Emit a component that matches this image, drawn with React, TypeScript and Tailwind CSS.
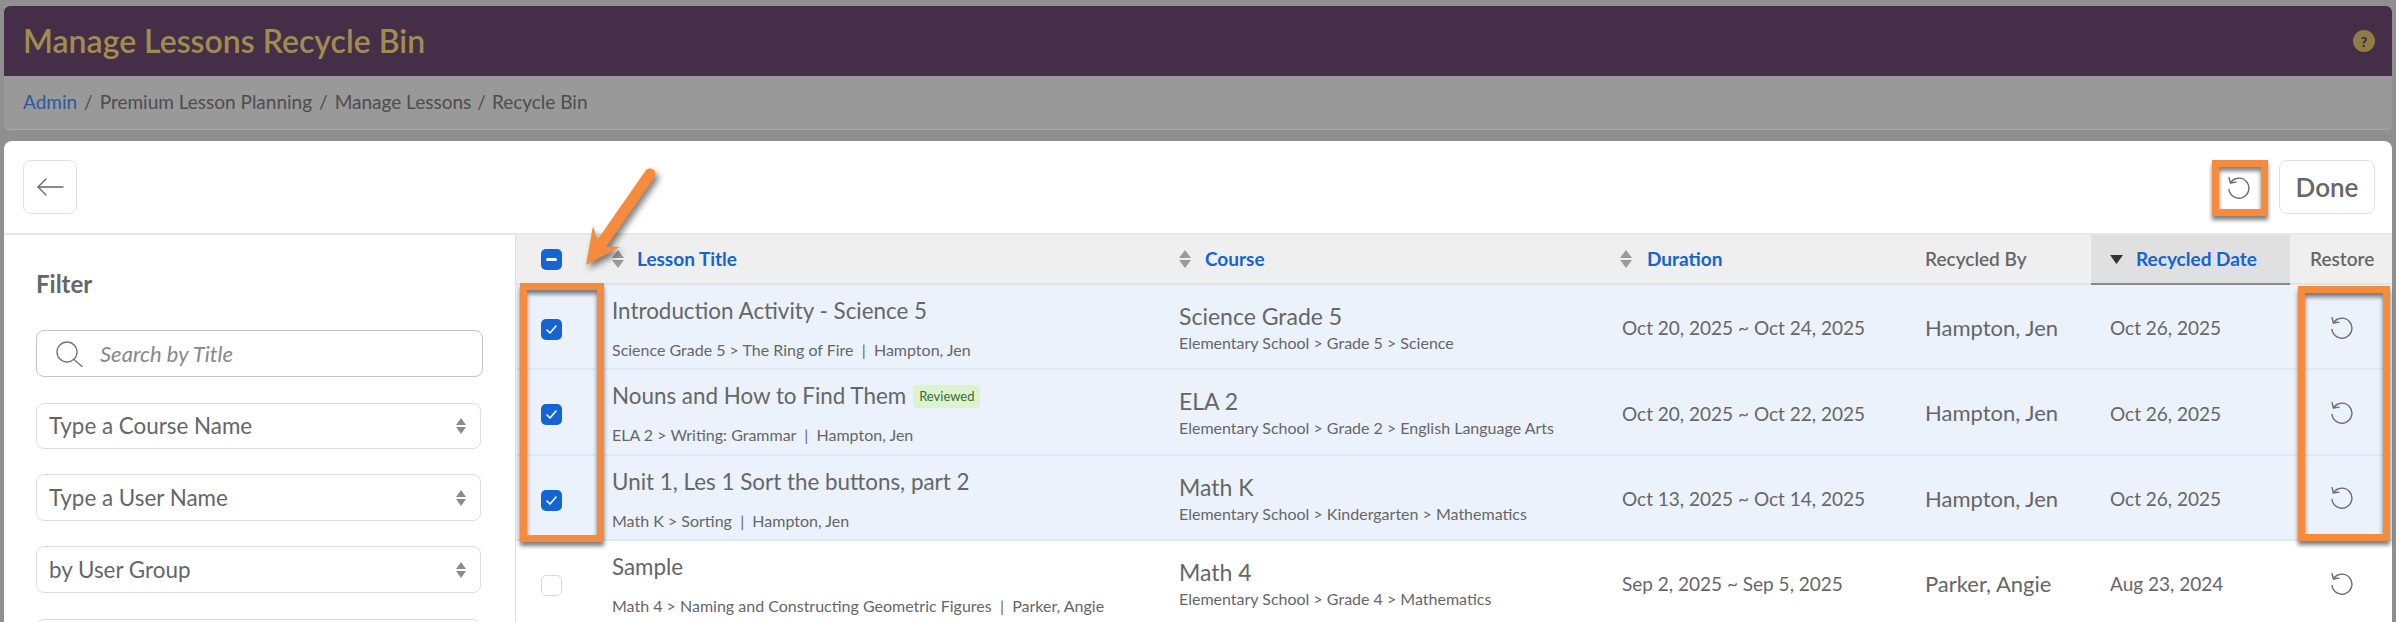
import type { ReactNode } from 'react'

const rowGrid = 'grid grid-cols-[96px_567px_441px_305px_166px_199px_102px]'

interface Lesson {
  title: string
  reviewed?: boolean
  crumbs: string
  person: string
  course: string
  path: string
  duration: string
  date: string
  selected: boolean
}

const lessons: Lesson[] = [
  {
    title: 'Introduction Activity - Science 5',
    crumbs: 'Science Grade 5 > The Ring of Fire',
    person: 'Hampton, Jen',
    course: 'Science Grade 5',
    path: 'Elementary School > Grade 5 > Science',
    duration: 'Oct 20, 2025 ~ Oct 24, 2025',
    date: 'Oct 26, 2025',
    selected: true,
  },
  {
    title: 'Nouns and How to Find Them',
    reviewed: true,
    crumbs: 'ELA 2 > Writing: Grammar',
    person: 'Hampton, Jen',
    course: 'ELA 2',
    path: 'Elementary School > Grade 2 > English Language Arts',
    duration: 'Oct 20, 2025 ~ Oct 22, 2025',
    date: 'Oct 26, 2025',
    selected: true,
  },
  {
    title: 'Unit 1, Les 1 Sort the buttons, part 2',
    crumbs: 'Math K > Sorting',
    person: 'Hampton, Jen',
    course: 'Math K',
    path: 'Elementary School > Kindergarten > Mathematics',
    duration: 'Oct 13, 2025 ~ Oct 14, 2025',
    date: 'Oct 26, 2025',
    selected: true,
  },
  {
    title: 'Sample',
    crumbs: 'Math 4 > Naming and Constructing Geometric Figures',
    person: 'Parker, Angie',
    course: 'Math 4',
    path: 'Elementary School > Grade 4 > Mathematics',
    duration: 'Sep 2, 2025 ~ Sep 5, 2025',
    date: 'Aug 23, 2024',
    selected: false,
  },
]

function RestoreIcon() {
  return (
    <svg width="24" height="24" viewBox="0 0 24 24" fill="none" stroke="#6a6a6a" strokeWidth="1.4" strokeLinecap="round" strokeLinejoin="round">
      <path d="M4.6 7.6A10 10 0 1 1 3 14.5" />
      <path d="M3 2.6 4.4 8l5.6-.9" />
    </svg>
  )
}

function SortArrows() {
  return (
    <svg width="12" height="18" viewBox="0 0 12 18" fill="#9a9a9a" className="shrink-0">
      <path d="M6 0 12 8H0Z" />
      <path d="M0 10H12L6 18Z" />
    </svg>
  )
}

function SelectCaret() {
  return (
    <svg width="10" height="16" viewBox="0 0 10 16" fill="#8c8c8c">
      <path d="M5 0 10 7H0Z" />
      <path d="M0 9H10L5 16Z" />
    </svg>
  )
}

function Checkbox({ state }: { state: 'checked' | 'mixed' | 'empty' }) {
  if (state === 'empty') {
    return <div className="h-[21px] w-[21px] rounded-[5px] border border-[#d9d9d9] bg-white" />
  }
  return (
    <div className="flex h-[21px] w-[21px] items-center justify-center rounded-[5px] bg-[#1464d2]">
      {state === 'checked' ? (
        <svg width="13" height="13" viewBox="0 0 13 13" fill="none" stroke="white" strokeWidth="1.6" strokeLinecap="round" strokeLinejoin="round">
          <path d="M2 7l3 3 6-7" />
        </svg>
      ) : (
        <div className="h-[3px] w-[11px] rounded-sm bg-white" />
      )}
    </div>
  )
}

function FilterSelect({ label, className }: { label: string, className: string }) {
  return (
    <div className={`flex w-[445px] items-center justify-between rounded-lg border border-[#dedede] pl-[12px] pr-[14px] text-[22.4px] text-[#666] ${className}`}>
      <span>{label}</span>
      <SelectCaret />
    </div>
  )
}

function HeaderLink({ children }: { children: ReactNode }) {
  return <span className="font-bold text-[#1464d2]">{children}</span>
}

function LessonRow({ lesson }: { lesson: Lesson }) {
  return (
    <div className={`${rowGrid} h-[85.33px] border-b-2 ${lesson.selected ? 'border-[#dbe9fa] bg-[#ebf2fc]' : 'border-transparent bg-white'}`}>
      <div className="flex items-center pl-[25px] pt-[6px]">
        <Checkbox state={lesson.selected ? 'checked' : 'empty'} />
      </div>
      <div className="pt-[10px]">
        <div className="flex h-[32px] items-center text-[22.4px] leading-[32px] text-[#666]">
          {lesson.title}
          {lesson.reviewed && (
            <span className="ml-[7px] flex h-[23px] items-center rounded-[3px] bg-[#dcf3d0] px-[6px] text-[13px] text-[#3d6b30]">Reviewed</span>
          )}
        </div>
        <div className="mt-[13px] whitespace-pre text-[16px] leading-[20px] text-[#666]">
          {lesson.crumbs}
          {'  |  '}
          {lesson.person}
        </div>
      </div>
      <div className="pt-[15px]">
        <div className="text-[23px] leading-[32px] text-[#666]">{lesson.course}</div>
        <div className="mt-[1px] text-[16px] leading-[20px] text-[#666]">{lesson.path}</div>
      </div>
      <div className="flex items-center pl-[2px] pt-[4px] text-[19px] text-[#666]">{lesson.duration}</div>
      <div className="flex items-center pt-[2px] text-[22px] text-[#666]">{lesson.person}</div>
      <div className="flex items-center pl-[19px] pt-[4px] text-[19px] text-[#666]">{lesson.date}</div>
      <div className="flex items-center pl-[39px]">
        <RestoreIcon />
      </div>
    </div>
  )
}

function TableHeader() {
  return (
    <div className={`${rowGrid} h-[50px] border-b-2 border-[#e3e3e3] bg-[#efefef] text-[19px]`}>
      <div className="flex items-center pl-[25px]">
        <Checkbox state="mixed" />
      </div>
      <div className="flex items-center gap-[13px]">
        <SortArrows />
        <HeaderLink>Lesson Title</HeaderLink>
      </div>
      <div className="flex items-center gap-[14px]">
        <SortArrows />
        <HeaderLink>Course</HeaderLink>
      </div>
      <div className="flex items-center gap-[15px]">
        <SortArrows />
        <HeaderLink>Duration</HeaderLink>
      </div>
      <div className="flex items-center font-semibold text-[#666]">Recycled By</div>
      <div className="-mb-[2px] flex items-center gap-[13px] border-b-2 border-[#888] bg-[#e0e0e0] pl-[19px]">
        <svg width="13" height="9" viewBox="0 0 13 9" fill="#333" className="shrink-0">
          <path d="M0 0H13L6.5 9Z" />
        </svg>
        <HeaderLink>Recycled Date</HeaderLink>
      </div>
      <div className="flex items-center pl-[20px] font-semibold text-[#666]">Restore</div>
    </div>
  )
}

function FilterPanel() {
  return (
    <div className="w-[511px] shrink-0 pl-[32px]">
      <div className="pt-[35px] text-[24px] font-bold leading-[28px] text-[#666]">Filter</div>
      <div className="mt-[32px] flex h-[47px] w-[447px] items-center rounded-lg border border-[#c4c4c4] pl-[19px]">
        <svg width="27" height="26" viewBox="0 0 27 26" fill="none" stroke="#777" strokeWidth="1.4" strokeLinecap="round">
          <circle cx="11" cy="11" r="10" />
          <path d="M18 18.5 26 25.5" />
        </svg>
        <span className="ml-[17px] text-[22px] italic text-[#888]">Search by Title</span>
      </div>
      <FilterSelect label="Type a Course Name" className="mt-[26px] h-[46px]" />
      <FilterSelect label="Type a User Name" className="mt-[25px] h-[47px]" />
      <FilterSelect label="by User Group" className="mt-[25px] h-[47px]" />
      <div className="mt-[26px] h-[47px] w-[445px] rounded-lg border border-[#dedede]" />
    </div>
  )
}

function Callouts() {
  const box = 'absolute border-[7px] border-[#f68b3e] [box-shadow:0_4px_4px_rgba(0,0,0,0.5),inset_0_4px_4px_rgba(0,0,0,0.5)]'
  return (
    <>
      <div className={`${box} left-[520px] top-[283px] h-[259px] w-[84px]`} />
      <div className={`${box} left-[2212px] top-[160px] h-[56px] w-[56px]`} />
      <div className={`${box} left-[2298px] top-[286px] h-[255px] w-[92px]`} />
      <svg
        className="absolute left-[570px] top-[160px] [filter:drop-shadow(3px_4px_3px_rgba(0,0,0,0.5))]"
        width="100"
        height="120"
        viewBox="0 0 100 120"
      >
        <path d="M23 66 27 78 37 87H50L16 105Z" fill="#f68b3e" />
        <path d="M80 14 32 83" stroke="#f68b3e" strokeWidth="11" strokeLinecap="round" />
      </svg>
    </>
  )
}

export default function App() {
  return (
    <div className="relative h-[622px] w-[2396px] overflow-hidden bg-[#8f8f8f] font-['Lato','Liberation_Sans',sans-serif]">
      <div className="px-[4px] pt-[6px]">
        <div className="rounded-b-md border-b border-[#a8a8a8] bg-[#999]">
          <div className="flex h-[70px] items-center justify-between rounded-t-md bg-[#452e47] pl-[19px] pr-[17px]">
            <div className="text-[32px] font-semibold text-[#a08c4e]">Manage Lessons Recycle Bin</div>
            <div className="flex h-[22px] w-[22px] items-center justify-center rounded-full bg-[#8f7b45] text-[14px] font-black text-[#3a2b35]">?</div>
          </div>
          <div className="flex h-[53px] items-center pl-[19px] text-[19px] text-[#4d4d4d]">
            <span className="text-[#2c5a9f]">Admin</span>
            <span className="mx-[7px]">/</span>
            <span>Premium Lesson Planning</span>
            <span className="mx-[7px]">/</span>
            <span>Manage Lessons</span>
            <span className="mx-[6px]">/</span>
            <span>Recycle Bin</span>
          </div>
        </div>
        <div className="mt-[11px] rounded-t-lg bg-white">
          <div className="flex h-[94px] items-center justify-between border-b-2 border-[#e8e8e8] pl-[19px] pr-[17px]">
            <div className="flex h-[54px] w-[54px] items-center justify-center rounded-lg border border-[#e0e0e0]">
              <svg width="27" height="18" viewBox="0 0 27 18" fill="none" stroke="#666" strokeWidth="1.3" strokeLinecap="round" strokeLinejoin="round">
                <path d="M26 9H1" />
                <path d="M9 1 1 9l8 8" />
              </svg>
            </div>
            <div className="flex items-center">
              <div className="mr-[29px] flex items-center">
                <RestoreIcon />
              </div>
              <div className="flex h-[54px] w-[96px] items-center justify-center rounded-lg border border-[#e0e0e0] text-[26px] font-semibold text-[#666]">Done</div>
            </div>
          </div>
          <div className="flex">
            <FilterPanel />
            <div className="h-[400px] grow border-l border-[#dedede]">
              <TableHeader />
              {lessons.map((lesson) => (
                <LessonRow key={lesson.title} lesson={lesson} />
              ))}
            </div>
          </div>
        </div>
      </div>
      <Callouts />
    </div>
  )
}
